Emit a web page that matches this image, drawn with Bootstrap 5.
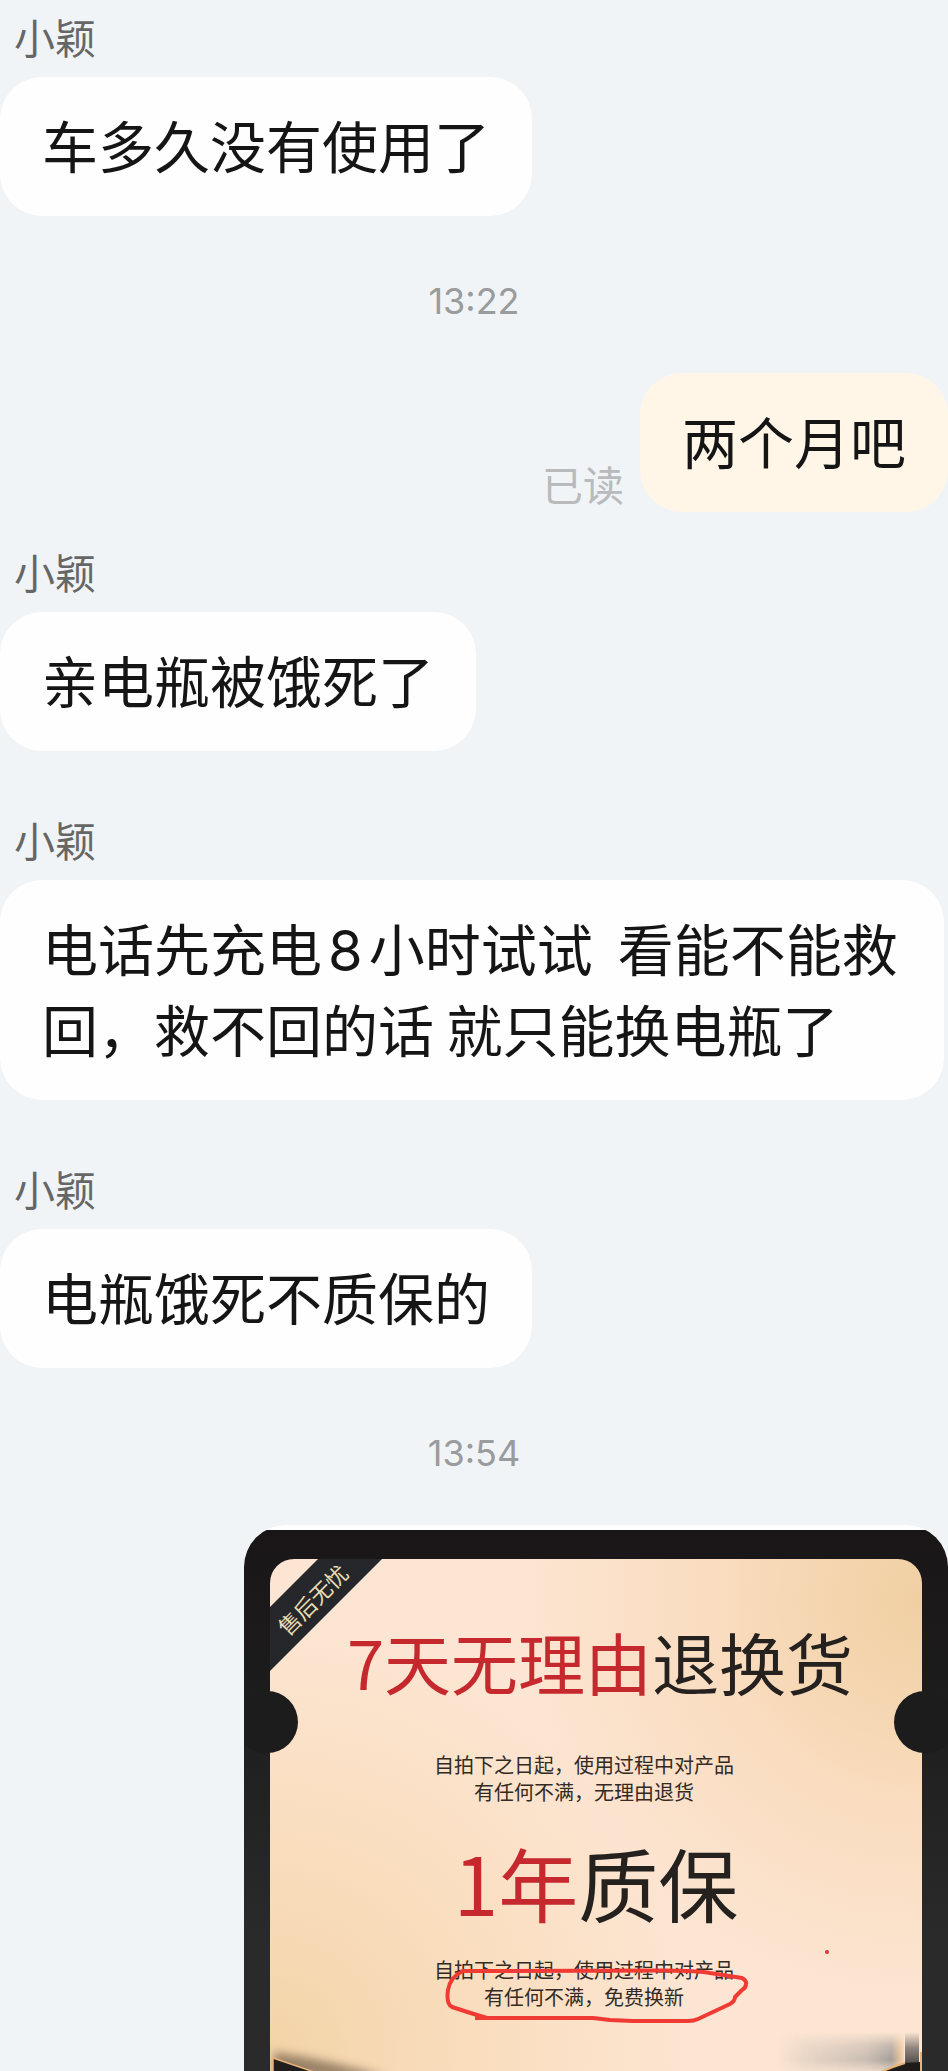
<!DOCTYPE html>
<html lang="zh-CN">
<head>
<meta charset="utf-8">
<meta name="viewport" content="width=device-width, initial-scale=1">
<title>小颖</title>
<link href="https://cdn.jsdelivr.net/npm/bootstrap@5.3.0/dist/css/bootstrap.min.css" rel="stylesheet">
<style>
  body { background: #f0f4f7; color: #151515; font-family: "Noto Sans CJK SC", sans-serif; }
  .chat { padding-top: 6px; }
  .msg-in { margin-bottom: 58px; }
  .msg-out { margin-bottom: 29px; }
  .sender { margin: 0 0 11px 14px; font-size: 41px; line-height: 60px; color: #666; }
  .bubble { padding: 26px 42px 32px; border-radius: 42px; font-size: 56px; line-height: 81px; white-space: pre-wrap; }
  .bubble-in { background: #fefefe; }
  .bubble-out { background: #fff6e8; }
  .digit { margin: 0 6px; font-family: Inter, sans-serif; line-height: 1; }
  .read-state { margin: 0 16px 2px 0; font-size: 41px; line-height: 54px; color: #b8babc; }
  .stamp { margin: 0 0 50px; padding-top: 5px; font-family: Inter, sans-serif; font-size: 36px; line-height: 44px; color: #999b9d; }
  .photo { margin-left: 244px; padding-top: 5px; border-radius: 42px 42px 0 0; background: #fff; }
  .photo-frame { padding: 29px 26px 0; background: linear-gradient(#1a1617, #1c1b1c 25%, #2a2a2a 75%); }
  .coupon { padding: 62px 0; border-radius: 24px 24px 0 0;
    background:
      radial-gradient(circle at 100% 8%, #f0cfa2 0%, rgba(249, 217, 184, .7) 26%, rgba(252, 228, 208, 0) 50%),
      radial-gradient(circle at 0% 96%, #f3d4a8 0%, rgba(249, 219, 184, .7) 28%, rgba(252, 228, 208, 0) 52%),
      #fce5d2; }
  .notch { top: 132px; width: 62px; height: 62px; border-radius: 50%; background: #1c1c1d; }
  .notch-l { left: -34px; }
  .notch-r { right: -34px; }
  .ribbon { top: 0; left: 0; width: 112px; height: 112px; }
  .ribbon-band { width: 112px; height: 112px; background: #25272a; clip-path: polygon(48px 0, 112px 0, 0 112px, 0 48px); }
  .ribbon-text { top: 28px; left: -4px; width: 92px; font-size: 22px; line-height: 24px; color: #e9dcb2; transform: rotate(-45deg); }
  .promise { margin: 0; font-size: 67px; line-height: 80px; font-weight: 400; color: #25211f; }
  .promise-year { margin-top: 31px; font-size: 80px; line-height: 90px; }
  .hot { color: #c5282d; }
  .terms { margin-bottom: 0; font-size: 20px; line-height: 27px; color: #332a24; }
  .terms-a { margin-top: 50px; }
  .terms-b { margin-top: 30px; }
  .circle-mark { top: 0; left: 0; overflow: visible; }
</style>
</head>
<body>
<main class="chat overflow-hidden">
  <section class="msg-in">
    <p class="sender">小颖</p>
    <div class="d-flex"><div class="bubble bubble-in">车多久没有使用了</div></div>
  </section>

  <p class="stamp text-center">13:22</p>

  <section class="msg-out d-flex justify-content-end align-items-end">
    <p class="read-state">已读</p>
    <div class="bubble bubble-out">两个月吧</div>
  </section>

  <section class="msg-in">
    <p class="sender">小颖</p>
    <div class="d-flex"><div class="bubble bubble-in">亲电瓶被饿死了</div></div>
  </section>

  <section class="msg-in">
    <p class="sender">小颖</p>
    <div class="d-flex me-1"><div class="bubble bubble-in">电话先充电<span class="digit">8</span>小时试试  看能不能救回，救不回的话 就只能换电瓶了</div></div>
  </section>

  <section class="msg-in">
    <p class="sender">小颖</p>
    <div class="d-flex"><div class="bubble bubble-in">电瓶饿死不质保的</div></div>
  </section>

  <p class="stamp text-center">13:54</p>

  <section class="photo overflow-hidden">
    <div class="photo-frame">
      <div class="coupon position-relative text-center">
        <div class="ribbon position-absolute">
          <div class="ribbon-band"></div>
          <div class="ribbon-text position-absolute text-nowrap">售后无忧</div>
        </div>
        <div class="notch notch-l position-absolute"></div>
        <div class="notch notch-r position-absolute"></div>

        <h2 class="promise ps-2"><span class="hot">7天无理由</span>退换货</h2>
        <div class="pe-4"><p class="terms terms-a">自拍下之日起，使用过程中对产品<br>有任何不满，无理由退货</p></div>

        <h2 class="promise promise-year"><span class="hot">1年</span>质保</h2>
        <div class="pe-4">
          <div class="terms terms-b d-inline-block position-relative align-top">自拍下之日起，使用过程中对产品<br>有任何不满，免费换新
            <svg class="circle-mark position-absolute" width="400" height="80" viewBox="434 1956 400 80" fill="none" aria-hidden="true">
              <path d="M487 2018Q470 2013 452 2007Q446 2004 448 1990Q450 1977 463 1971L667 1970.500Q700 1971 710 1973L742 1978Q747 1981 746 1984Q746 1988 742 1990L735 1997Q735 2001 730 2004L698 2019Q694 2021 688 2021L633 2021L610 2020L593 2018H475" stroke="#f03a34" stroke-width="4" stroke-linejoin="round"/>
              <circle cx="827" cy="1952" r="2" fill="#d8323c"/>
            </svg>
          </div>
        </div>

        <svg class="position-absolute bottom-0 start-0" width="160" height="40" viewBox="0 0 160 40" aria-hidden="true">
          <defs><filter id="soft" x="-20%" y="-60%" width="140%" height="220%"><feGaussianBlur stdDeviation="5"/></filter></defs>
          <path d="M4 20Q60 28 120 46H4Z" fill="#5d4a38" opacity=".6" filter="url(#soft)"/>
          <path d="M3 26L50 42H3Z" fill="#1f1d1d" stroke="#e9b27a" stroke-width="1.500"/>
        </svg>
        <svg class="position-absolute bottom-0 end-0" width="150" height="40" viewBox="0 0 150 40" aria-hidden="true">
          <defs>
            <linearGradient id="haze"><stop offset="0" stop-color="#d0c0b4" stop-opacity="0"/><stop offset=".25" stop-color="#d0c3b8" stop-opacity=".6"/><stop offset=".7" stop-color="#b9b0a8" stop-opacity=".85"/><stop offset=".9" stop-color="#9a9794"/><stop offset=".97" stop-color="#e3bb92"/><stop offset="1" stop-color="#ecc9a4" stop-opacity=".6"/></linearGradient>
            <linearGradient id="fade" x2="0" y2="1"><stop offset="0" stop-color="#fff" stop-opacity="0"/><stop offset=".35" stop-color="#fff" stop-opacity=".6"/><stop offset=".7" stop-color="#fff" stop-opacity=".9"/><stop offset="1" stop-color="#fff" stop-opacity=".2"/></linearGradient>
            <linearGradient id="deep" x2="0" y2="1"><stop offset="0" stop-color="#6c6662" stop-opacity="0"/><stop offset=".4" stop-color="#6a6461" stop-opacity=".75"/><stop offset="1" stop-color="#2a2625"/></linearGradient>
            <mask id="hazeMask"><rect width="150" height="40" fill="url(#fade)"/></mask>
          </defs>
          <rect x="6" width="126" height="40" fill="url(#haze)" mask="url(#hazeMask)"/>
          <rect x="133" width="14" height="40" fill="url(#deep)"/>
          <path d="M104 42Q120 35 133 31L149 30V42Z" fill="#1d1a19"/>
          <path d="M104 42Q120 35 133 31M149 20V40" fill="none" stroke="#e9b27a" stroke-width="2"/>
        </svg>
      </div>
    </div>
  </section>
</main>
<script src="https://cdn.jsdelivr.net/npm/bootstrap@5.3.0/dist/js/bootstrap.bundle.min.js"></script>
</body>
</html>
